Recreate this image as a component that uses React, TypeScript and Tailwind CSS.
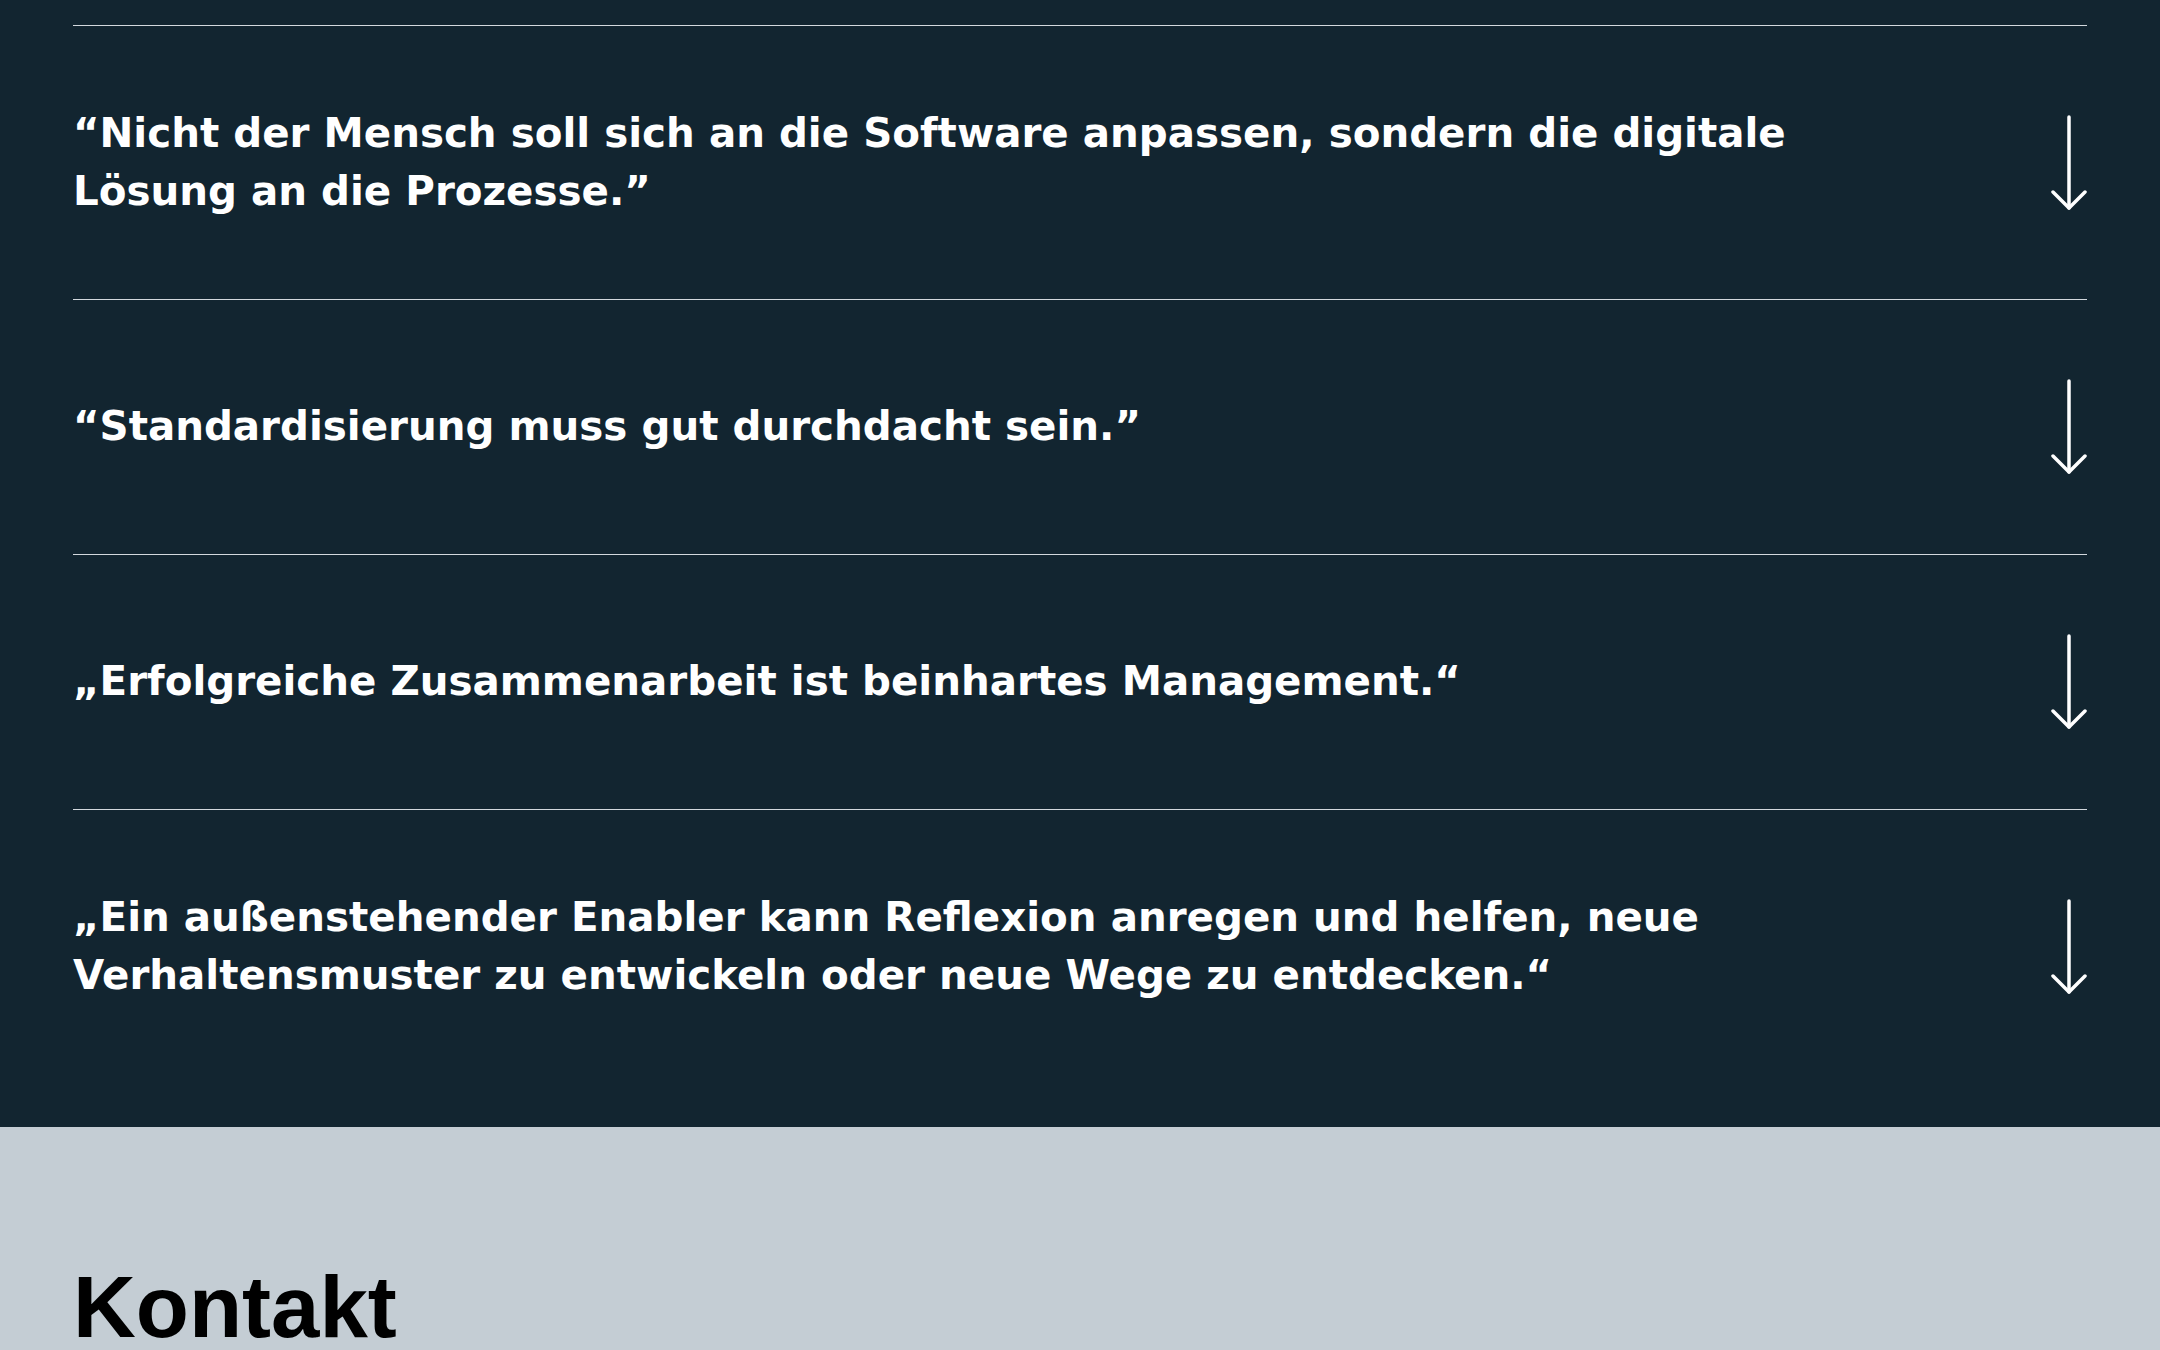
import React from "react";

const quotes: string[] = [
  "“Nicht der Mensch soll sich an die Software anpassen, sondern die digitale Lösung an die Prozesse.”",
  "“Standardisierung muss gut durchdacht sein.”",
  "„Erfolgreiche Zusammenarbeit ist beinhartes Management.“",
  "„Ein außenstehender Enabler kann Reflexion anregen und helfen, neue Verhaltensmuster zu entwickeln oder neue Wege zu entdecken.“",
];

function ArrowDown() {
  return (
    <svg
      width="36"
      height="96"
      viewBox="0 0 36 96"
      fill="none"
      stroke="#ffffff"
      strokeWidth="3.5"
      strokeLinecap="round"
      strokeLinejoin="round"
      className="shrink-0"
    >
      <line x1="18" y1="2" x2="18" y2="93" />
      <polyline points="2,77 18,93 34,77" />
    </svg>
  );
}

function QuoteRow({ text }: { text: string }) {
  return (
    <div className="flex items-center justify-between gap-10 border-t border-[#d3d9dd] py-[79px]">
      <p
        className="max-w-[1800px] text-[40.4px] leading-[57.5px] font-bold text-white"
        style={{ fontFamily: "'DejaVu Sans', 'Open Sans', sans-serif" }}
      >
        {text}
      </p>
      <ArrowDown />
    </div>
  );
}

export default function App() {
  return (
    <div className="min-h-[1350px] w-full bg-[#c4cdd4]">
      <section className="bg-[#122530] px-[73px] pt-[25px] pb-[44px]">
        {quotes.map((q, i) => (
          <QuoteRow key={i} text={q} />
        ))}
      </section>
      <section className="px-[73px] pt-[136px] pb-20">
        <h2
          className="text-[87px] leading-none font-bold text-black"
          style={{ fontFamily: "'Liberation Sans', Arial, sans-serif" }}
        >
          Kontakt
        </h2>
      </section>
    </div>
  );
}
